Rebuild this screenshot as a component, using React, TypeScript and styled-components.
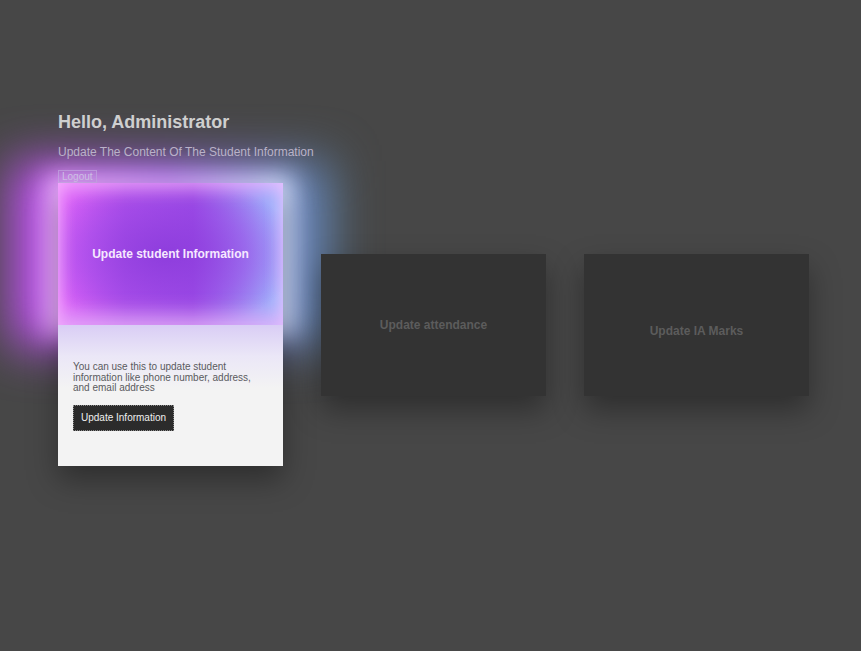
import React from 'react';
import styled, { createGlobalStyle } from 'styled-components';

const GlobalStyle = createGlobalStyle`
  body {
    margin: 0;
    padding: 0;
    background: #474747;
    font-family: "Liberation Sans", Arial, sans-serif;
  }
`;

const Page = styled.main`
  min-height: 651px;
  box-sizing: border-box;
  padding: 112px 0 0 58px;
  overflow: hidden;
`;

const Title = styled.h1`
  margin: 0;
  font-size: 18px;
  line-height: 20px;
  font-weight: 700;
  color: #cfcfcf;
`;

const Subtitle = styled.p`
  margin: 13px 0 0;
  font-size: 12px;
  line-height: 14px;
  color: #bab2c8;
`;

const LogoutBtn = styled.button`
  display: block;
  margin-top: 11px;
  height: 13px;
  padding: 0 3px;
  font-family: inherit;
  font-size: 10px;
  line-height: 11px;
  color: #d2c4ea;
  background: rgba(190, 150, 230, 0.15);
  border: 1px solid rgba(200, 180, 230, 0.55);
  cursor: pointer;
`;

const CardRow = styled.section`
  display: flex;
  align-items: center;
  gap: 38px;
`;

const FeatureCard = styled.article`
  position: relative;
  flex-shrink: 0;
  width: 225px;
  height: 283px;
  display: flex;
  flex-direction: column;
  background: #f3f3f3;
  box-shadow: 0 14px 28px rgba(0, 0, 0, 0.35);
`;

const Hero = styled.div`
  position: relative;
  height: 142px;
  display: flex;
  align-items: center;
  justify-content: center;
  background:
    radial-gradient(ellipse 60% 55% at 48% 50%, rgba(140, 60, 220, 0.9) 0%, rgba(150, 70, 230, 0.5) 60%, transparent 100%),
    linear-gradient(90deg, #e266fa 0%, #b04ee8 30%, #9a48e2 60%, #a0c0ff 100%);
  box-shadow: inset 0 8px 16px rgba(255, 190, 255, 0.6), inset 0 -12px 18px rgba(230, 180, 250, 0.7);

  /* wide soft halo */
  &::before {
    content: '';
    position: absolute;
    inset: -22px -46px -22px -46px;
    z-index: -1;
    background: linear-gradient(90deg, #c850f5 0%, #a060e8 45%, #5f8fb8 100%);
    filter: blur(24px);
  }

  /* bright rim close to the card */
  &::after {
    content: '';
    position: absolute;
    inset: -8px -10px -10px -12px;
    z-index: -1;
    background: linear-gradient(90deg, #f2b8ff 0%, #d8a0ff 50%, #d8ecff 100%);
    filter: blur(12px);
  }
`;

const HeroTitle = styled.h2`
  margin: 0;
  font-size: 12px;
  font-weight: 700;
  color: #f6e8ff;
`;

const CardBody = styled.div`
  flex: 1;
  padding: 37px 14px 0 15px;
  background: linear-gradient(180deg, #d9cdf5 0%, #ebe7f7 22%, #f3f3f3 45%);
`;

const Description = styled.p`
  margin: 0;
  font-size: 10px;
  line-height: 10.5px;
  color: #5a5a5e;
`;

const ActionBtn = styled.button`
  margin-top: 11px;
  height: 26px;
  padding: 0 7px;
  font-family: inherit;
  font-size: 10px;
  color: #f0f0f0;
  background: #2b2b2b;
  border: 1px dotted #8a8a8a;
  cursor: pointer;
`;

const DarkCard = styled.article<{ $offset: number }>`
  flex-shrink: 0;
  width: 225px;
  height: 142px;
  box-sizing: border-box;
  padding-top: ${({ $offset }) => $offset}px;
  display: flex;
  align-items: center;
  justify-content: center;
  background: #333333;
  box-shadow: 0 14px 28px rgba(0, 0, 0, 0.35);
`;

const DarkTitle = styled.h2`
  margin: 0;
  font-size: 12px;
  font-weight: 700;
  color: #5c5c5c;
`;

export default function App() {
  return (
    <>
      <GlobalStyle />
      <Page>
        <Title>Hello, Administrator</Title>
        <Subtitle>Update The Content Of The Student Information</Subtitle>
        <LogoutBtn>Logout</LogoutBtn>
        <CardRow>
          <FeatureCard>
            <Hero>
              <HeroTitle>Update student Information</HeroTitle>
            </Hero>
            <CardBody>
              <Description>
                You can use this to update student information like phone number, address, and email address
              </Description>
              <ActionBtn>Update Information</ActionBtn>
            </CardBody>
          </FeatureCard>
          <DarkCard $offset={0}>
            <DarkTitle>Update attendance</DarkTitle>
          </DarkCard>
          <DarkCard $offset={12}>
            <DarkTitle>Update IA Marks</DarkTitle>
          </DarkCard>
        </CardRow>
      </Page>
    </>
  );
}
